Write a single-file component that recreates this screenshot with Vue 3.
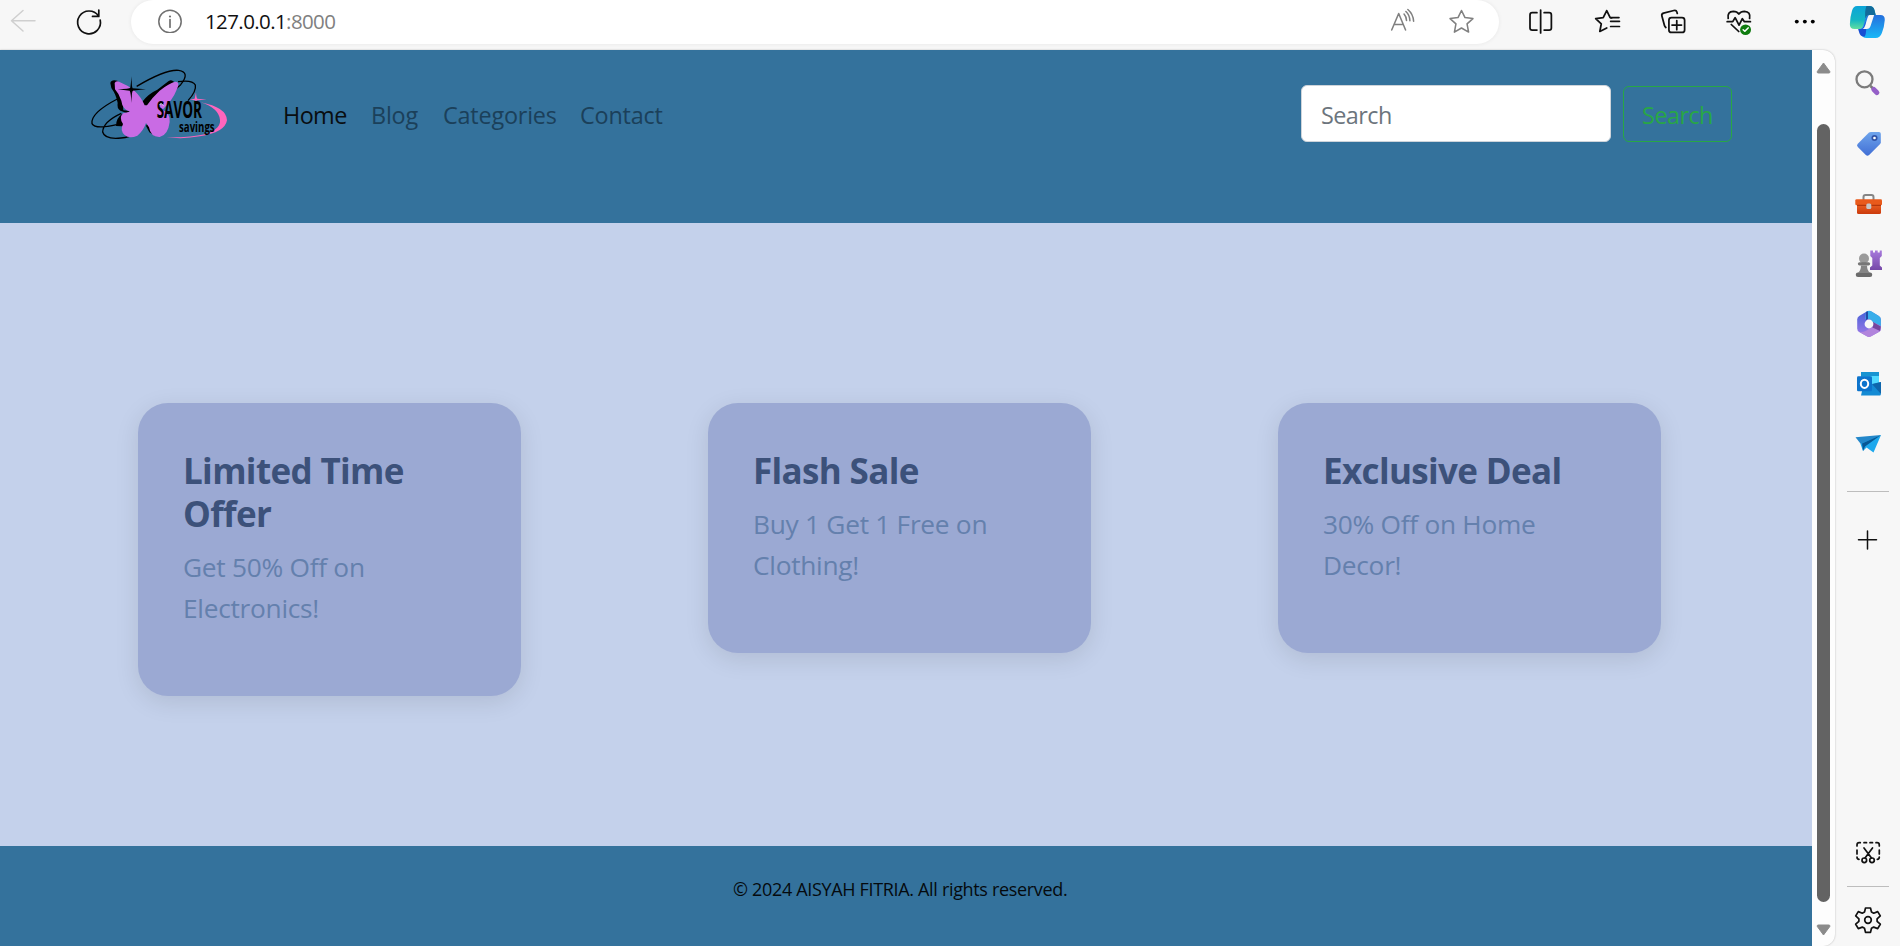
<script setup>
const links = [
  { name: 'Home', cls: 'home' },
  { name: 'Blog', cls: 'blog' },
  { name: 'Categories', cls: 'categories' },
  { name: 'Contact', cls: 'contact' },
]
const offers = [
  { title: 'Limited Time Offer', text: 'Get 50% Off on Electronics!' },
  { title: 'Flash Sale', text: 'Buy 1 Get 1 Free on Clothing!' },
  { title: 'Exclusive Deal', text: '30% Off on Home Decor!' },
]
</script>

<template>
  <div class="browser">
    <header class="toolbar">
      <svg class="back" viewBox="0 0 64 50"><path d="M35 20.7H11.5M23 10.5 11.5 20.7 23 31" class="ln" stroke="#cfcfcf" /></svg>
      <svg class="reload" viewBox="64 0 67 50"><path d="M98.5 16A11.4 11.4 0 1 0 100.2 20M98.8 10v6.400H92.500" class="ln bold" stroke="#111" /></svg>
      <div class="address">
        <svg class="info" viewBox="158 9 24 24"><circle cx="170" cy="21.5" r="11.2" class="ln" stroke="#707070" /><path d="M170 19.5v7.7" class="ln bold" stroke="#707070" /><circle cx="170" cy="16.5" r="1.1" fill="#707070" /></svg>
        <span class="url">127.0.0.1<i>:8000</i></span>
        <svg class="aloud" viewBox="1384 0 34 44" preserveAspectRatio="none"><path d="M1390.5 30 1397.3 13.5 1404 30M1393 24.5h8.800M1402.500 14q2.200 2.500 2.400 6.500M1404.300 11.500q3.700 3.500 3.900 9.300M1406.200 9.500q5.200 4.500 5.600 11.800" class="ln" stroke="#808080" /></svg>
        <svg class="fav" viewBox="1441 0 34 44" preserveAspectRatio="none"><path d="m1458 10.500 3.400 7.100 7.700 1-5.700 5.300 1.500 8.200-6.900-4.100-6.900 4.100 1.500-8.200-5.700-5.300 7.700-1Z" class="ln" stroke="#808080" /></svg>
      </div>
      <svg class="tool first" viewBox="1503 0 64 50" preserveAspectRatio="none"><path d="M1531 12.700h-4.500q-2.200 0-2.200 2.200v13q0 2.200 2.200 2.200h4.500M1538 12.700h4.800q2.200 0 2.200 2.200v13q0 2.200-2.200 2.200h-4.800M1534.600 10v23" class="ln bold" stroke="#111" /></svg>
      <svg class="tool" viewBox="1567 0 64 50" preserveAspectRatio="none"><path d="m1603.500 17.800-1.500-.2-3.300-7-3.400 7-7.300 1 5.400 5.200-1.400 7.700 6.700-3.500M1603.500 21.500" class="ln bold" stroke="#111" /><path d="M1602.500 21.300h8.500M1602.500 26.500h8.500M1606 16.300" class="ln bold" stroke="#111" /><path d="M1602.500 17.600h8" class="ln bold" stroke="#111" /></svg>
      <svg class="tool" viewBox="1631 0 64 50" preserveAspectRatio="none"><rect x="1659" y="17.700" width="15.200" height="14.700" rx="2.500" class="ln bold" stroke="#111" /><path d="M1666.600 20.500v9.200M1662 25.100h9.200M1656 27.500q-1-.8-1.300-2l-2.500-9.500q-.6-2.200 1.600-2.900l10-2.600q2.300-.6 2.900 1.500l.4 1.500" class="ln bold" stroke="#111" /></svg>
      <svg class="tool" viewBox="1695 0 64 50" preserveAspectRatio="none"><path d="M1716.500 18.500q-1.200-7 5-7.200 3.500 0 5.300 2.700 2-2.700 5.400-2.700 6.300.3 5 7.200M1715.500 21.700h5.400l2.300-4 3.800 7.500 3.200-6.500 2 3h5.800M1719.500 24.500l7.200 7" class="ln bold" stroke="#111" /><circle cx="1733.300" cy="29.700" r="5.300" fill="#107c10" /><path d="m1731 29.800 1.600 1.500 3.200-3.400" class="ln" stroke="#fff" /></svg>
      <svg class="tool" viewBox="1759 0 64 50" preserveAspectRatio="none"><circle cx="1783" cy="21.600" r="1.900" /><circle cx="1790.800" cy="21.600" r="1.900" /><circle cx="1798.500" cy="21.600" r="1.900" /></svg>
      <svg class="tool" viewBox="1823 0 64 50" preserveAspectRatio="none">
        <defs>
          <linearGradient id="cp1" x2="0" y2="1"><stop stop-color="#0ca4d8" /><stop offset=".6" stop-color="#13b6c4" /><stop offset="1" stop-color="#61dfa0" /></linearGradient>
          <linearGradient id="cp2" x2="0" y2="1"><stop stop-color="#246fdd" /><stop offset="1" stop-color="#19b8f7" /></linearGradient>
        </defs>
        <path d="M1841.500 6h11.500q4.500 0 5.300 4l1.200 5h-6q-2.500 0-3.500 3.500l-2 7q-1 3.500-4 3.500h-5q-4.800 0-4.500-5 .2-7 2-13 1.300-5 5-5Z" fill="url(#cp1)" />
        <path d="M1850.500 6h3q3.700 0 4.800 4l1.200 5h-6q-2.800 0-4 3.500-.8-7.500 1-12.500Z" fill="#126b9a" />
        <path d="M1843.500 29q3 0 4-3.500l2-7q1.200-3.500 4.300-3.500h10.200q4.500 0 4.300 5-.4 6.500-2.800 13-1.800 5-6 5h-9q-4 0-5-4.500l-1-4.500Z" fill="url(#cp2)" />
        <path d="M1842.500 29h2q2.800 0 4-3.500l1.200-4q1.500 10-.7 15h-2q-2.500-.5-3.500-4Z" fill="#174ed3" />
        <path d="M1853.500 15h4.500l-3.300 10.500q-1 3.500-4 3.500h-4q2-1 2.800-4l2-7q.6-2.300 2-3Z" fill="#f7f7f7" />
      </svg>
    </header>

    <div class="workspace">
      <div class="window">
        <main class="page">
          <nav class="navbar">
            <svg class="logo" viewBox="0 0 480 300">
              <g fill="none" stroke="#000" stroke-width="4">
                <path d="M170 94Q258 42 296 46 332 52 302 89 267 123 194 158" />
                <path d="M112 132Q31 174 36 206 45 224 110 209M124 175Q69 200 68 231 74 254 123 249 151 248 157 236M294 80Q338 74 346 90 350 108 324 137" />
              </g>
              <path d="M91 84Q94 72 112 77L125 95 130 166 151 168 140 174 121 167Q110 160 113 144 109 120 94 99ZM187 140Q205 116 232 104L266 78Q274 72 282 80L225 150 195 160ZM108 213Q108 190 125 178L140 176 140 214 124 214ZM203 204 225 242 208 232 198 213Z" fill="#000" />
              <path d="M104 84Q107 77 117 80 141 89 163 107 184 126 194 151L201 151Q216 128 239 107 267 84 287 80 301 81 291 102 278 136 247 164 270 171 269 201 264 241 239 246 212 247 207 217L198 204Q190 228 172 242 148 252 134 240 119 227 129 207 116 189 129 175L150 170Q127 163 124 137 117 116 105 103Z" fill="#c96be4" />
              <path d="M155 64Q155 99 158 100L198 103Q160 106 158 108 155 111 155 144 152 110 149 107L113 103Q149 101 151 98Z" fill="#000" />
              <path d="M348 112Q349 129 352 131L380 134 352 136 348 138 344 136 329 134 344 131ZM362 142Q440 157 441 196 435 233 359 244 313 253 259 247 333 248 382 236 423 219 420 195 417 160 362 142Z" fill="#ff65bd" />
              <text x="230" y="189" textLength="136" lengthAdjust="spacingAndGlyphs" class="savor">SAVOR</text>
              <text x="297" y="230" textLength="107" lengthAdjust="spacingAndGlyphs" class="savings">savings</text>
              <path d="m239 150 4-5 7 7" stroke="#d9f4fa" stroke-width="3" fill="none" />
            </svg>
            <ul class="links">
              <li v-for="l in links" :key="l.name" :class="l.cls"><a>{{ l.name }}</a></li>
            </ul>
            <form class="search" @submit.prevent>
              <input type="text" placeholder="Search" />
              <button type="submit">Search</button>
            </form>
          </nav>
          <section class="offers">
            <article v-for="o in offers" :key="o.title" class="card">
              <h2>{{ o.title }}</h2>
              <p>{{ o.text }}</p>
            </article>
          </section>
          <footer class="footer"><span>© 2024 AISYAH FITRIA. All rights reserved.</span></footer>
        </main>
        <div class="scroll">
          <svg viewBox="1812 50 23 74" class="up"><path d="M1823.500 63 1829.800 71.500q.5 1.500-1 1.500h-10.500q-1.500 0-1-1.500Z" fill="#8b8b8b" stroke="#8b8b8b" stroke-linejoin="round" /></svg>
          <div class="thumb"></div>
          <svg viewBox="1812 902 23 44" class="down"><path d="M1823.500 935 1829.800 926.500q.5-1.500-1-1.500h-10.500q-1.500 0-1 1.500Z" fill="#8b8b8b" stroke="#8b8b8b" stroke-linejoin="round" /></svg>
        </div>
      </div>

      <aside class="sidebar">
        <svg viewBox="1836 52 64 60">
          <path d="m1870.500 86 8 8" stroke="#777" stroke-width="2.500" /><path d="m1873.800 89.500 3 3" stroke="#9560c8" stroke-width="5" stroke-linecap="round" />
          <circle cx="1864.500" cy="79.300" r="8" fill="none" stroke="#7b7b7b" stroke-width="2.300" />
        </svg>
        <svg viewBox="1836 112 64 60">
          <defs><linearGradient id="tag" x2="0" y2="1"><stop stop-color="#6fa5ec" /><stop offset="1" stop-color="#416fd5" /></linearGradient></defs>
          <path d="M1869 132.500q.8-.6 2-.6h8q1.800 0 1.800 1.800v8.500q0 1-.7 1.700l-11 11q-1.700 1.500-3.300 0l-8-8q-1.600-1.600 0-3.200Z" fill="url(#tag)" /><circle cx="1874.500" cy="138" r="2.200" fill="#fff" stroke="#3153a6" stroke-width="1.700" />
        </svg>
        <svg viewBox="1836 172 64 60">
          <defs><linearGradient id="box" x2="0" y2="1"><stop stop-color="#ee6424" /><stop offset="1" stop-color="#cb3b0d" /></linearGradient></defs>
          <path d="M1863.500 200v-3q0-2 2-2h6q2 0 2 2v3" fill="none" stroke="#858585" stroke-width="2" />
          <rect x="1857" y="203" width="24" height="11" rx="1.500" fill="url(#box)" /><rect x="1855.300" y="199.300" width="26.700" height="6" rx="1.300" fill="#e95a1b" /><path d="M1857 205.300h24" stroke="#a92f08" /><rect x="1866.300" y="203.500" width="5" height="5.500" rx="1.500" fill="#c6c6c6" />
        </svg>
        <svg viewBox="1836 232 64 60">
          <defs><linearGradient id="rook" x2="0" y2="1"><stop stop-color="#a779dc" /><stop offset="1" stop-color="#7648a8" /></linearGradient></defs>
          <path d="M1870.300 250.500h2.700v2h2v-2h2.700v2h2v-2h2.100v5.500l-2 2v7.500l2.200 2v2.500h-12v-2.500l2.300-2v-7.500l-2-2Z" fill="url(#rook)" />
          <circle cx="1864" cy="258.500" r="5" fill="#9b9b9b" /><path d="M1859.500 263.800h9" stroke="#777" stroke-width="3.300" stroke-linecap="round" /><path d="M1858 274.700h12" stroke="#6b6b6b" stroke-width="4.500" stroke-linecap="round" /><path d="M1861 265.500h6q0 4.500 3 7.500h-12q3-3 3-7.500Z" fill="#858585" />
        </svg>
        <svg viewBox="1836 292 64 60">
          <defs><linearGradient id="m1" x2="0" y2="1"><stop stop-color="#4460d8" /><stop offset="1" stop-color="#a37be8" /></linearGradient></defs>
          <path d="M1866.800 311.500q2.200-1.200 4.400 0l7.600 4.500q2 1.200 2 3.500v9q0 2.300-2 3.500l-7.600 4.300q-2.200 1.200-4.400 0l-7.600-4.300q-2-1.200-2-3.500v-9q0-2.300 2-3.500Z" fill="url(#m1)" />
          <path d="M1866 312q3-2.200 6-.2l6.800 4.200q2 1.200 2 3.500v8.500l-8-4.500-2.500-4.500h-5Z" fill="#38aeea" />
          <path d="M1859 331.800q4 .8 7-1l7-4 1-4.300 6.800 3.500v2.500q0 2.300-2 3.500l-7.600 4.300q-2.200 1.200-4.400 0Z" fill="#b184dc" />
          <path d="m1873 322 7.800 4.500-.8 4.500-7.500-3.500Z" fill="#76469e" /><path d="M1866 312l2-.8v7.800l-2 1Z" fill="#234aa5" /><circle cx="1869" cy="324" r="4.400" fill="#f7f7f7" />
        </svg>
        <svg viewBox="1836 352 64 60">
          <rect x="1861" y="372" width="18" height="18" rx="1.500" fill="#28b5ed" /><path d="M1861 372h18v4h-18Z" fill="#1794d2" /><path d="M1870 376h9v8h-9Z" fill="#50d9ff" /><path d="m1863 387 17.800-5v12.500q0 1-1 1h-18.800Z" fill="#148bd4" /><path d="m1872 384 9-2v12Z" fill="#0e66ac" />
          <rect x="1857" y="376.300" width="15" height="15" rx="1.300" fill="#0d74cc" /><ellipse cx="1864.500" cy="383.800" rx="3.700" ry="4.100" fill="none" stroke="#fff" stroke-width="2" />
        </svg>
        <svg viewBox="1836 412 64 60">
          <path d="m1855.500 437.300 25.500-2.300-19 10.500Z" fill="#2387ca" /><path d="m1881 435-7.500 17.500-7-5-3.500 3.500-2.500-7Z" fill="#1da8ed" /><path d="m1881 435-19 8.500 1 7.500 2-4.500Z" fill="#075896" />
        </svg>
        <svg class="rule-a" viewBox="1836 472 64 38"><path d="M1847 491.500h42" stroke="#bdbdbd" /></svg>
        <svg viewBox="1836 510 64 60"><path d="M1858.500 539.700h18M1867.500 531v18" class="ln" stroke="#111" /></svg>
        <svg class="snip" viewBox="1836 824 64 56">
          <path d="M1857 846v-1q0-2.300 2.300-2.300h1M1864 842.700h2.500M1870 842.700h2.500M1876 842.700h1q2.300 0 2.300 2.300v1M1857 850v4M1879.300 850v4M1857 857q0 2.300 2 2.300M1879.300 857q0 2.300-2 2.300M1864 848l7.500 10M1872.500 848l-7.500 10" class="ln bold" stroke="#111" /><circle cx="1864.300" cy="860.300" r="2.300" class="ln bold" stroke="#111" /><circle cx="1872" cy="860.300" r="2.300" class="ln bold" stroke="#111" />
        </svg>
        <svg class="rule-b" viewBox="1836 880 64 12"><path d="M1847 886.500h42" stroke="#bdbdbd" /></svg>
        <svg class="gear" viewBox="1836 892 64 54">
          <path d="M1865.500 908h5l1 4.100 2.200 1.100 4-1.600 2.600 4.300-3.200 2.900v2.500l3.200 2.900-2.600 4.400-4-1.500-2.200 1.200-1 4.100h-5l-1-4.100-2.200-1.200-4 1.500-2.600-4.400 3.200-2.900v-2.500l-3.200-2.900 2.600-4.300 4 1.600 2.200-1.100Z" class="ln bold" stroke="#111" /><circle cx="1868" cy="920" r="3.300" class="ln bold" stroke="#111" />
        </svg>
      </aside>
    </div>
  </div>
</template>

<style>
html, body { margin: 0; overflow: hidden; }
</style>

<style scoped>
* { box-sizing: border-box; }
svg { display: block; flex: none; }
.ln { fill: none; stroke-width: 1.5; stroke-linecap: round; stroke-linejoin: round; }
.ln.bold { stroke-width: 1.7; }
.browser { width: 1900px; height: 946px; overflow: hidden; background: #f7f7f7; font-family: "Open Sans", "Noto Sans", sans-serif; display: flex; flex-direction: column; }
.toolbar { height: 50px; flex: none; display: flex; overflow: hidden; }
.back { width: 64px; height: 50px; }
.reload { width: 67px; height: 50px; }
.tool { width: 66.1px; height: 50px; }
.first { margin-left: 8.7px; }
.address { width: 1368px; flex: none; height: 44px; background: #fff; border-radius: 22px; display: flex; align-items: center; box-shadow: 0 0 4px #00000012; }
.info { width: 24px; height: 24px; margin-left: 27px; margin-top: -2px; }
.url { margin-left: 23px; width: 180px; font-size: 20.5px; letter-spacing: -.6px; color: #111; line-height: 42px; height: 44px; white-space: nowrap; }
.url i { font-style: normal; color: #808080; }
.aloud { width: 35px; height: 44px; margin-left: auto; }
.fav { width: 35px; height: 44px; margin-left: 24px; margin-right: 20px; }
.workspace { flex: 1; display: flex; min-height: 0; }
.window { width: 1835px; flex: none; display: flex; background: #fdfdfd; border-radius: 0 12px 12px 0; box-shadow: 0 0 2px #0004; overflow: hidden; }
.page { width: 1812px; display: flex; flex-direction: column; }
.navbar { height: 173px; background: #34729c; display: flex; align-items: flex-start; flex: none; }
.logo { width: 160px; height: 100px; margin: 5px 0 0 80px; }
.links { list-style: none; display: flex; margin: 47px 0 0 43px; padding: 0; }
.links li { font-size: 23.4px; line-height: 37px; color: #1b405a; white-space: nowrap; letter-spacing: -.2px; }
.links .home { width: 88px; color: #090d10; letter-spacing: -.6px; }
.links .blog { width: 72px; }
.links .categories { width: 137px; }
.search { display: flex; align-items: flex-end; margin: 35px 80px 0 auto; gap: 12px; }
.search input { width: 310px; height: 57px; border: 1px solid #ced4da; border-radius: 6px; padding: 3px 19px 0; font: 23.4px "Open Sans", "Noto Sans", sans-serif; letter-spacing: -.55px; outline: none; }
.search input::placeholder { color: #6c757d; opacity: 1; }
.search button { width: 109px; height: 56px; border: 1px solid #28a745; border-radius: 6px; background: transparent; color: #28a745; font: 23.4px "Open Sans", "Noto Sans", sans-serif; letter-spacing: -.55px; padding: 2px 0 0; }
.offers { flex: 1; background: #c4d1eb; display: flex; align-items: flex-start; gap: 187px; padding: 180px 0 0 138px; }
.card { width: 383px; background: #9ba9d3; border-radius: 30px; padding: 46px 45px; box-shadow: 0 6px 24px #0000001a; }
.card h2 { margin: 0 0 12px; font-size: 35px; line-height: 43px; color: #3c517a; letter-spacing: -.65px; font-weight: 700; }
.card p { margin: 0 0 21px; padding-right: 20px; font-size: 26.3px; line-height: 41px; color: #6480ad; letter-spacing: -.28px; }
.footer { height: 100px; flex: none; background: #34729c; padding: 30px 0 0 733px; font-size: 18px; line-height: 27px; color: #050a0e; letter-spacing: -.33px; white-space: nowrap; }
.scroll { width: 23px; display: flex; flex-direction: column; align-items: center; }
.up { width: 23px; height: 74px; }
.thumb { width: 13px; height: 778px; border-radius: 7px; background: #636363; }
.down { width: 23px; height: 44px; }
.sidebar { width: 64px; margin-left: 1px; padding-top: 2px; height: 896px; display: flex; flex-direction: column; }
.sidebar svg { width: 64px; height: 60px; }
.sidebar .rule-a { height: 38px; }
.sidebar .snip { height: 56px; margin-top: auto; }
.sidebar .rule-b { height: 12px; }
.sidebar .gear { height: 54px; }
.savor { font: 700 70px "Open Sans", sans-serif; }
.savings { font: 700 44px "Open Sans", sans-serif; }
</style>
